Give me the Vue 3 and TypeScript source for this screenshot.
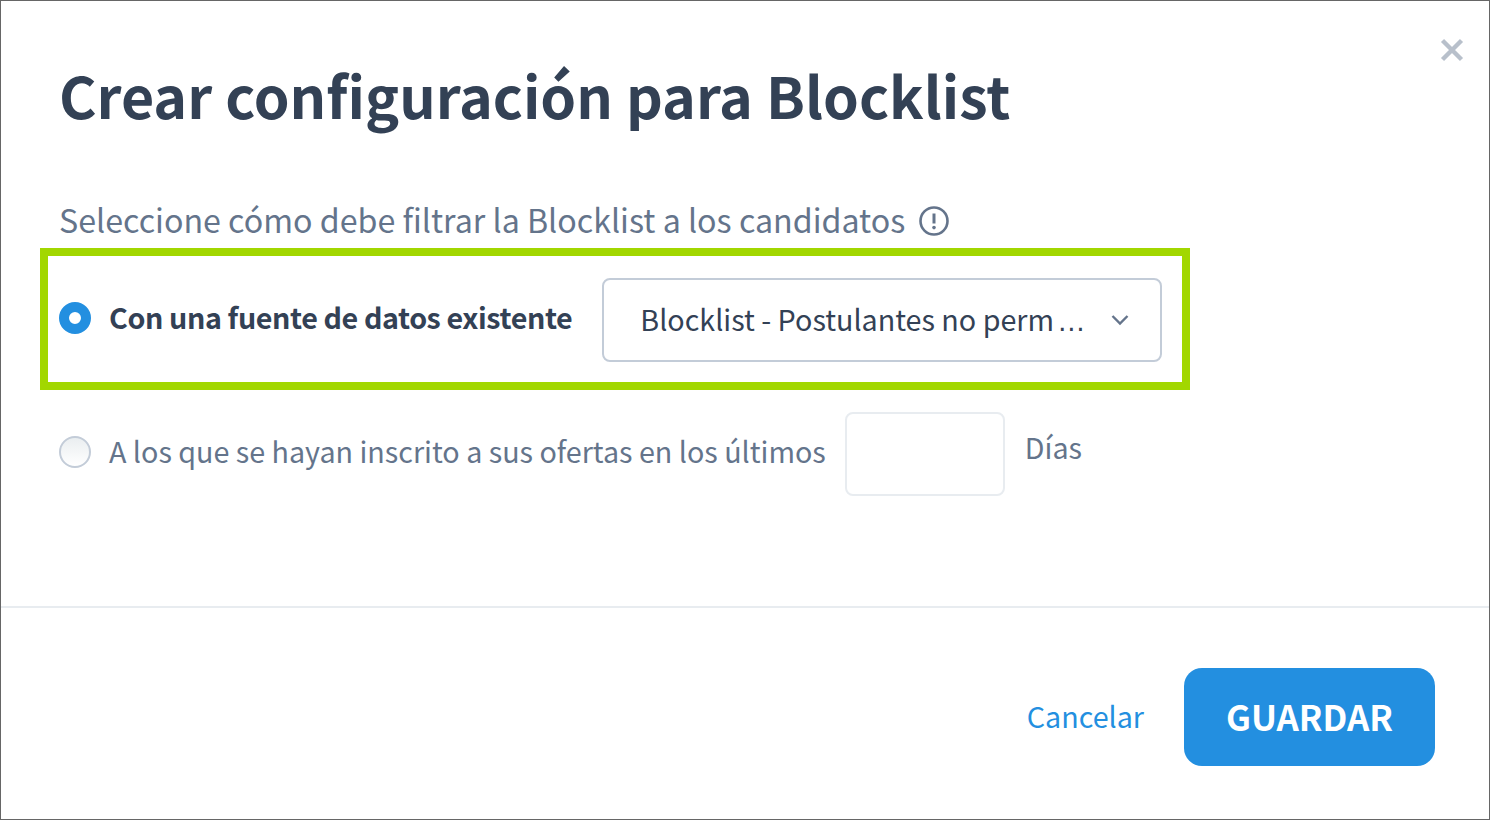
<template>
  <div class="modal">
    <button class="close" type="button" aria-label="Cerrar">
      <svg width="24" height="24" viewBox="0 0 24 24">
        <path d="M2.5 2.5 21.5 21.5M21.5 2.5 2.5 21.5" stroke="#b8c0cb" stroke-width="4.4" fill="none" />
      </svg>
    </button>

    <div class="content">
      <h1 class="title">Crear configuración para Blocklist</h1>

      <p class="hint">
        <span>Seleccione cómo debe filtrar la Blocklist a los candidatos</span>
        <svg class="hint-icon" width="32" height="32" viewBox="0 0 32 32">
          <circle cx="16" cy="16" r="13.5" fill="none" stroke="#64748b" stroke-width="2.6" />
          <path d="M16 8.5v10" stroke="#64748b" stroke-width="3" fill="none" />
          <circle cx="16" cy="22.6" r="1.8" fill="#64748b" />
        </svg>
      </p>

      <div class="option highlighted">
        <span class="radio checked"></span>
        <span class="option-label strong">Con una fuente de datos existente</span>
        <div class="select">
          <span class="select-text">{{ selected }}<span class="dots">…</span></span>
          <svg width="18" height="12" viewBox="0 0 18 12">
            <path d="M1.5 2 9 9.5 16.5 2" stroke="#64748b" stroke-width="2.4" fill="none" />
          </svg>
        </div>
      </div>

      <div class="option second">
        <span class="radio"></span>
        <span class="option-label">A los que se hayan inscrito a sus ofertas en los últimos</span>
        <input class="days" type="text" />
        <span class="days-label">Días</span>
      </div>
    </div>

    <div class="footer">
      <a class="cancel">Cancelar</a>
      <button class="save" type="button">GUARDAR</button>
    </div>
  </div>
</template>

<script setup lang="ts">
import { ref } from 'vue';

const selected = ref<string>('Blocklist - Postulantes no perm');
</script>

<style>
html,
body {
  margin: 0;
  background: #fff;
}
</style>

<style scoped>
.modal {
  position: relative;
  box-sizing: border-box;
  width: 1490px;
  height: 820px;
  display: flex;
  flex-direction: column;
  border: 1px solid #666;
  background: #fff;
  font-family: "Noto Sans CJK SC", "Noto Sans", sans-serif;
  color: #64748b;
}

.close {
  position: absolute;
  top: 37px;
  right: 25px;
  padding: 0;
  border: 0;
  background: none;
  line-height: 0;
}

.content {
  height: 607px;
  box-sizing: border-box;
  padding: 56px 0 0 39px;
  border-bottom: 2px solid #e8ecf0;
}

.title {
  margin: 0 0 0 19px;
  font-size: 57.3px;
  line-height: 76px;
  font-weight: 700;
  color: #334155;
}

.hint {
  display: flex;
  align-items: center;
  margin: 64px 0 0 19px;
  font-size: 32.2px;
  line-height: 44px;
}

.hint-icon {
  margin: 4px 0 0 13px;
}

.option {
  display: flex;
  align-items: center;
  font-size: 28.7px;
}

.highlighted {
  box-sizing: border-box;
  width: 1150px;
  height: 142px;
  margin-top: 7px;
  padding-left: 11px;
  border: 8px solid #a2d700;
}

.second {
  margin-top: 22px;
  padding-left: 19px;
}

.radio {
  box-sizing: border-box;
  flex: none;
  width: 32px;
  height: 32px;
  margin-right: 18px;
  border: 2px solid #c3ccd8;
  border-radius: 50%;
  background: linear-gradient(#eaeef0, #fff);
}

.second .radio {
  margin-top: -4px;
}

.radio.checked {
  margin-top: -2px;
  border: 10px solid #238fe0;
  background: #fff;
}

.option-label {
  line-height: 40px;
  white-space: nowrap;
}

.second .option-label {
  margin-top: -6px;
}

.strong {
  margin-top: -4px;
  font-weight: 700;
  letter-spacing: -0.4px;
  color: #334155;
}

.select {
  box-sizing: border-box;
  flex: none;
  display: flex;
  align-items: center;
  justify-content: space-between;
  width: 560px;
  height: 84px;
  margin: 2px 0 0 30px;
  padding: 0 31px 0 36px;
  border: 2px solid #c3ccd8;
  border-radius: 8px;
  color: #334155;
}

.select-text {
  line-height: 40px;
  white-space: nowrap;
}

.dots {
  margin-left: 3px;
  font-family: "Liberation Sans", sans-serif;
}

.days {
  box-sizing: border-box;
  flex: none;
  width: 160px;
  height: 84px;
  margin-left: 19px;
  border: 2px solid #e8ecf0;
  border-radius: 8px;
  outline: none;
}

.days-label {
  margin: -14px 0 0 20px;
  line-height: 40px;
}

.footer {
  flex: 1;
  display: flex;
  align-items: center;
  justify-content: flex-end;
  padding: 7px 54px 0 0;
}

.cancel {
  margin-top: -2px;
  font-size: 28.7px;
  line-height: 40px;
  color: #238fe0;
}

.save {
  width: 251px;
  height: 98px;
  margin-left: 40px;
  padding: 0 0 2px;
  border: 0;
  border-radius: 18px;
  background: #238fe0;
  color: #fff;
  font-family: inherit;
  font-size: 34.8px;
  font-weight: 600;
}
</style>
